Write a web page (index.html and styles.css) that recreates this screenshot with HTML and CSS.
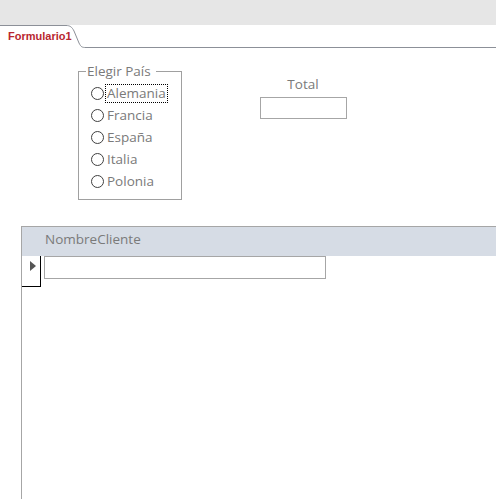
FILE: index.html
```html
<!DOCTYPE html>
<html>
<head>
<meta charset="utf-8">
<link rel="stylesheet" href="styles.css">
</head>
<body>
<div class="topbar"></div>
<div class="tabrow">
  <svg class="tabline" width="496" height="23" viewBox="0 0 496 23">
    <path d="M0,0.5 H66 C70,0.5 72,2 74,6 L79,18 C81,22 82,22.5 86,22.5 H496" fill="none" stroke="#8c9098" stroke-width="1"/>
  </svg>
  <span class="tabtext">Formulario1</span>
</div>
<div class="form">
  <fieldset class="group">
    <legend>Elegir País</legend>
    <div class="opt"><span class="radio"></span><span class="lbl focus">Alemania</span></div>
    <div class="opt"><span class="radio"></span><span class="lbl">Francia</span></div>
    <div class="opt"><span class="radio"></span><span class="lbl">España</span></div>
    <div class="opt"><span class="radio"></span><span class="lbl">Italia</span></div>
    <div class="opt"><span class="radio"></span><span class="lbl">Polonia</span></div>
  </fieldset>
  <div class="total">
    <div class="totlbl">Total</div>
    <div class="totbox"></div>
  </div>
</div>
<div class="sheet">
  <div class="head"><span>NombreCliente</span></div>
  <div class="row">
    <div class="selector"><span class="tri"></span></div>
    <div class="cell"></div>
  </div>
</div>
</body>
</html>
```

FILE: styles.css
```css
html, body {
  margin: 0;
  padding: 0;
  background: #fff;
  font-family: "Open Sans", "Noto Sans", sans-serif;
  overflow: hidden;
}
body {
  width: 496px;
  height: 499px;
}
.topbar {
  height: 25px;
  background: #e6e6e6;
}
.tabrow {
  position: relative;
  height: 23px;
}
.tabline {
  position: absolute;
  left: 0;
  top: 0;
}
.tabtext {
  position: absolute;
  left: 8px;
  top: 5px;
  font-size: 11px;
  font-weight: bold;
  color: #b8272f;
  font-family: "Liberation Sans", Arial, sans-serif;
}
.form {
  display: flex;
  align-items: flex-start;
  padding-top: 15px;
  padding-left: 78px;
  height: 163px;
}
.group {
  margin: 0;
  width: 104px;
  height: 137px;
  border: 1px solid #a0a0a0;
  padding: 3px 0 0 12px;
  box-sizing: border-box;
}
.group legend {
  font-size: 13.5px;
  color: #7a7a7a;
  padding: 0 5px 0 1px;
  margin-left: -5px;
  line-height: 16px;
}
.opt {
  display: flex;
  align-items: center;
  height: 22px;
}
.radio {
  width: 11px;
  height: 11px;
  border: 1px solid #404040;
  border-radius: 50%;
  margin-right: 1px;
  flex: none;
}
.lbl {
  font-size: 13.5px;
  color: #7a7a7a;
  line-height: 17px;
  padding: 0 1px;
  border: 1px solid transparent;
}
.lbl.focus {
  border: 1px dotted #000;
}
.total {
  margin-left: 78px;
  margin-top: 13px;
  width: 86px;
  display: flex;
  flex-direction: column;
  align-items: center;
}
.totlbl {
  font-size: 13.5px;
  color: #7a7a7a;
  line-height: 16px;
  height: 21px;
}
.totbox {
  width: 87px;
  height: 22px;
  border: 1px solid #a6a6a6;
  box-sizing: border-box;
}
.sheet {
  margin-left: 21px;
  height: 273px;
  border-left: 1px solid #a6a6a6;
  border-top: 1px solid #a6a6a6;
}
.head {
  height: 29px;
  box-sizing: border-box;
  background: #d6dce5;
  padding-left: 23px;
  padding-top: 3px;
  font-size: 13.5px;
  line-height: 18px;
  color: #7a7a7a;
}
.row {
  display: flex;
  align-items: flex-start;
}
.selector {
  width: 18px;
  height: 30px;
  border-right: 1px solid #000;
  border-bottom: 1px solid #000;
  position: relative;
}
.tri {
  position: absolute;
  left: 8px;
  top: 5px;
  width: 0;
  height: 0;
  border-left: 6px solid #555;
  border-top: 5px solid transparent;
  border-bottom: 5px solid transparent;
}
.cell {
  margin-left: 3px;
  width: 282px;
  height: 23px;
  border: 1px solid #a6a6a6;
  box-sizing: border-box;
}
```
